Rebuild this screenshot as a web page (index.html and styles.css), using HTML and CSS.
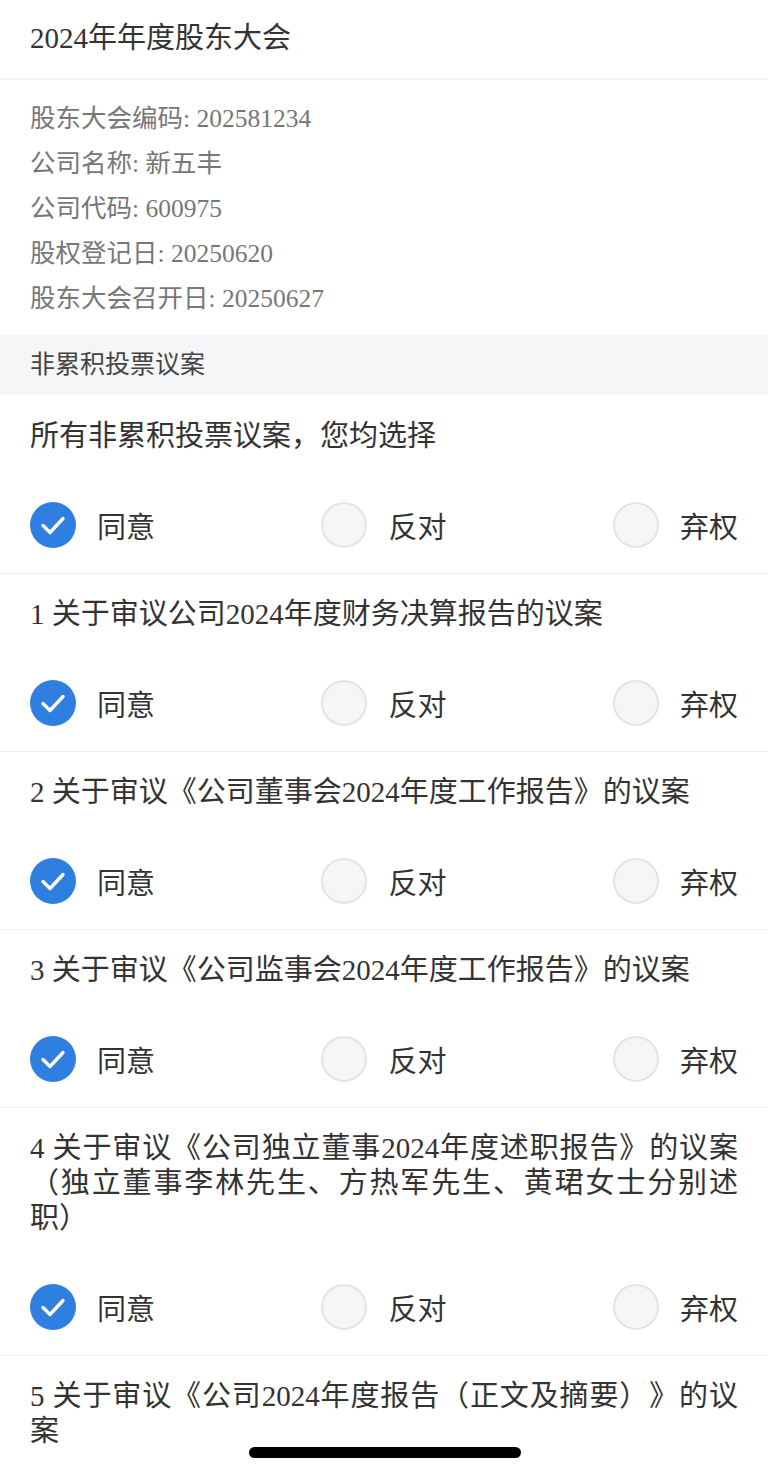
FILE: index.html
```html
<!DOCTYPE html>
<html>

<head>
    <meta charset="UTF-8">
    <title>2024年年度股东大会</title>

    <link rel="stylesheet" href="styles.css">
</head>

<body>
<div class="page">

    <!-- 제목 -->
    <div class="top">2024年年度股东大会</div>

    <!-- 대회 정보 -->
    <div class="info">
        <p>股东大会编码: 202581234</p>
        <p>公司名称: 新五丰</p>
        <p>公司代码: 600975</p>
        <p>股权登记日: 20250620</p>
        <p>股东大会召开日: 20250627</p>
    </div>

    <div class="section">非累积投票议案</div>

    <div class="item">
        <p class="ask">所有非累积投票议案，您均选择</p>
        <div class="pick">
            <span class="opt"><span class="dot on"><svg viewBox="0 0 46 46"><path d="M13 23.5l7 7 13-14"/></svg></span>同意</span>
            <span class="opt"><span class="dot"></span>反对</span>
            <span class="opt"><span class="dot"></span>弃权</span>
        </div>
    </div>

    <div class="item">
        <p class="ask">1 关于审议公司2024年度财务决算报告的议案</p>
        <div class="pick">
            <span class="opt"><span class="dot on"><svg viewBox="0 0 46 46"><path d="M13 23.5l7 7 13-14"/></svg></span>同意</span>
            <span class="opt"><span class="dot"></span>反对</span>
            <span class="opt"><span class="dot"></span>弃权</span>
        </div>
    </div>

    <div class="item">
        <p class="ask">2 关于审议《公司董事会2024年度工作报告》的议案</p>
        <div class="pick">
            <span class="opt"><span class="dot on"><svg viewBox="0 0 46 46"><path d="M13 23.5l7 7 13-14"/></svg></span>同意</span>
            <span class="opt"><span class="dot"></span>反对</span>
            <span class="opt"><span class="dot"></span>弃权</span>
        </div>
    </div>

    <div class="item">
        <p class="ask">3 关于审议《公司监事会2024年度工作报告》的议案</p>
        <div class="pick">
            <span class="opt"><span class="dot on"><svg viewBox="0 0 46 46"><path d="M13 23.5l7 7 13-14"/></svg></span>同意</span>
            <span class="opt"><span class="dot"></span>反对</span>
            <span class="opt"><span class="dot"></span>弃权</span>
        </div>
    </div>

    <div class="item">
        <p class="ask">4 关于审议《公司独立董事2024年度述职报告》的议案（独立董事李林先生、方热军先生、黄珺女士分别述职）</p>
        <div class="pick">
            <span class="opt"><span class="dot on"><svg viewBox="0 0 46 46"><path d="M13 23.5l7 7 13-14"/></svg></span>同意</span>
            <span class="opt"><span class="dot"></span>反对</span>
            <span class="opt"><span class="dot"></span>弃权</span>
        </div>
    </div>

    <div class="item">
        <p class="ask">5 关于审议《公司2024年度报告（正文及摘要）》的议案</p>
        <div class="pick">
            <span class="opt"><span class="dot on"><svg viewBox="0 0 46 46"><path d="M13 23.5l7 7 13-14"/></svg></span>同意</span>
            <span class="opt"><span class="dot"></span>反对</span>
            <span class="opt"><span class="dot"></span>弃权</span>
        </div>
    </div>

</div>

<!-- 홈 인디케이터 -->
<div class="home-bar"></div>
</body>

</html>
```

FILE: styles.css
```css
body {
    margin: 0;
    background: #fff;
    color: #333;
    font-family: "Liberation Serif", "Noto Sans CJK SC", serif;
}

p {
    margin: 0;
}

.top {
    padding: 18px 30px 20px;
    font-size: 29px;
    line-height: 40px;
    color: #333;
    border-bottom: 2px solid #f3f3f3;
}

.info {
    padding: 16px 30px 14px;
    font-size: 25.5px;
    line-height: 45px;
    color: #777;
}

.section {
    height: 60px;
    padding: 0 30px;
    font-size: 25px;
    line-height: 60px;
    color: #444;
    background: #f5f6f8;
}

.item {
    padding: 23px 30px 25px;
    border-top: 1px solid #eeeeee;
}

.section + .item {
    border-top-color: #fff;
}

.ask {
    font-size: 29px;
    line-height: 35px;
    text-align: justify;
    text-spacing-trim: space-all;
    color: #333;
}

.pick {
    display: flex;
    justify-content: space-between;
    margin-top: 48px;
}

.opt {
    display: flex;
    align-items: center;
    gap: 21px;
    height: 46px;
    font-size: 29px;
    color: #333;
}

.dot {
    box-sizing: border-box;
    width: 46px;
    height: 46px;
    border-radius: 50%;
    border: 2px solid #e4e4e4;
    background: #f6f6f6;
}

.dot.on {
    border: none;
    background: #2f7fe0;
}

.dot svg {
    display: block;
    width: 46px;
    height: 46px;
    fill: none;
    stroke: #fff;
    stroke-width: 3.4;
    stroke-linecap: round;
    stroke-linejoin: round;
}

.home-bar {
    position: fixed;
    left: 249px;
    bottom: 17px;
    width: 272px;
    height: 11px;
    border-radius: 6px;
    background: #000;
}
```
